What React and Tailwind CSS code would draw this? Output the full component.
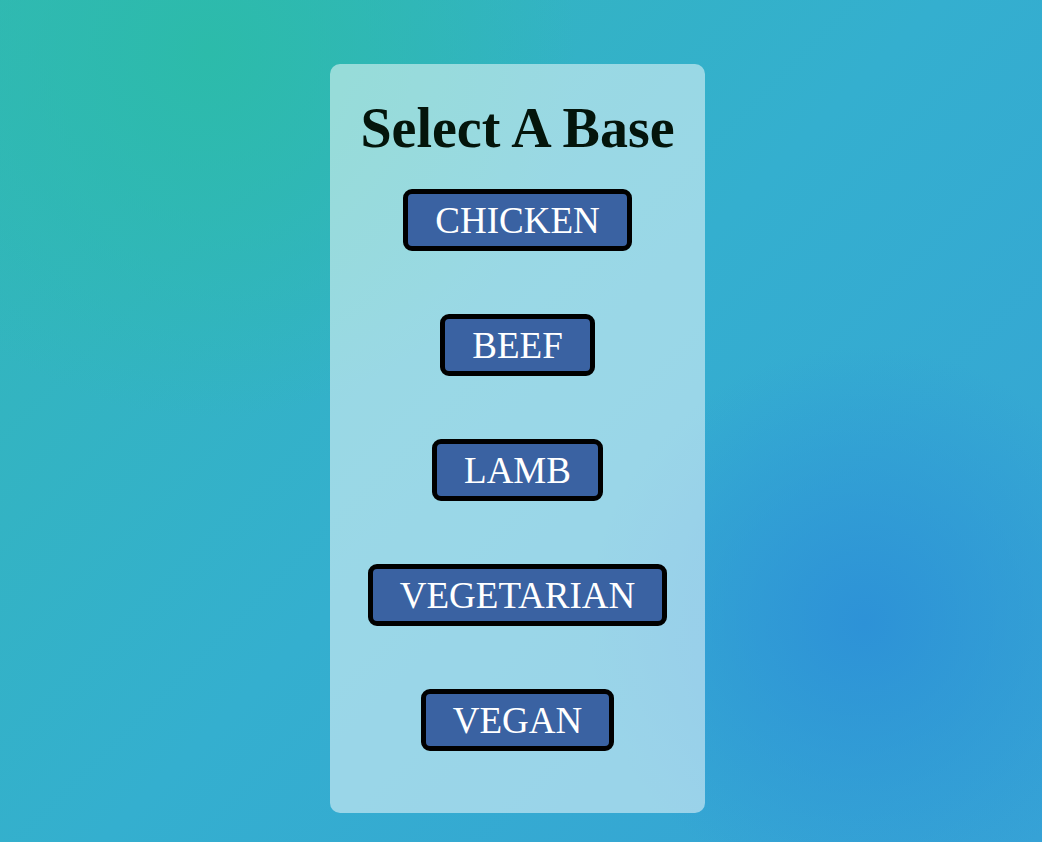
const bases = ["CHICKEN", "BEEF", "LAMB", "VEGETARIAN", "VEGAN"];

const App = () => {
  return (
    <main className="min-h-[842px] w-full flex justify-center pt-[64px] bg-[image:radial-gradient(circle_at_20%_6%,#2cbbaa_0%,transparent_32%),radial-gradient(circle_at_83%_74%,#2d92d7_0%,transparent_26%),linear-gradient(135deg,#32b8b6_0%,#34afcf_50%,#36a2d6_100%)]">
      <section className="w-[375px] h-[749px] mr-[7px] rounded-[10px] bg-white/50 flex flex-col items-center pt-[36px] pb-[62px] font-['Liberation_Serif',serif]">
        <h1 className="text-[56px] leading-none font-bold text-[#04150b]">Select A Base</h1>
        <div className="mt-[33px] flex flex-col items-center gap-[63px]">
          {bases.map((base) => (
            <button
              key={base}
              type="button"
              className="h-[62px] px-[27px] flex items-center justify-center rounded-[9px] border-[5px] border-black bg-[#3a62a2] text-white text-[37px] leading-none"
            >
              {base}
            </button>
          ))}
        </div>
      </section>
    </main>
  );
};

export default App;
